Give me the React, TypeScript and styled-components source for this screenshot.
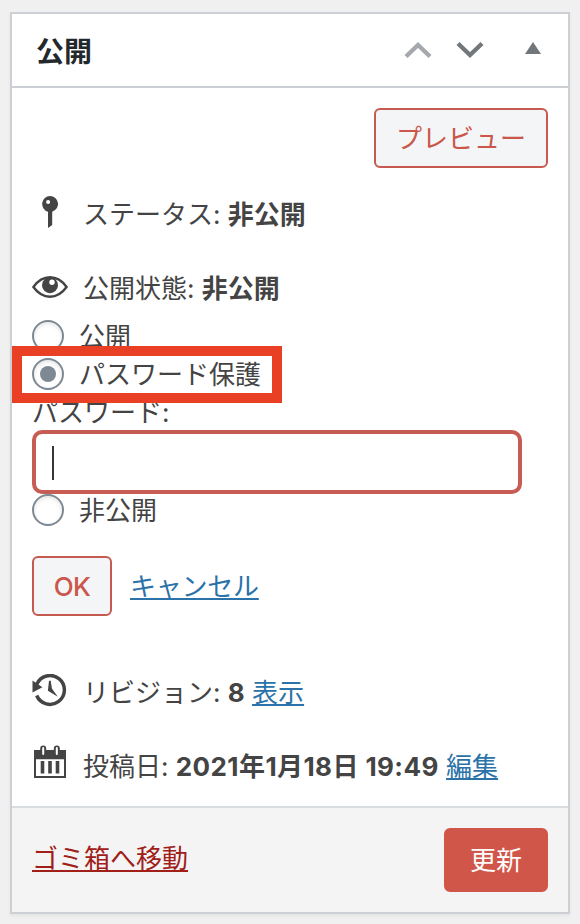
import React from "react";
import styled, { createGlobalStyle } from "styled-components";

const GlobalStyle = createGlobalStyle`
  *, *::before, *::after { box-sizing: border-box; }
  body {
    margin: 0;
    background: #f0f0f1;
    color: #444;
    font: 26px/38px Inter, "Noto Sans CJK JP", sans-serif;
  }
`;

const Page = styled.main`
  height: 924px;
  padding: 12px 10px 10px;
  overflow: hidden;
`;

const Panel = styled.section`
  position: relative;
  display: flex;
  flex-direction: column;
  height: 902px;
  border: 2px solid #ccd0d4;
  background: #fff;
  box-shadow: 0 2px 3px rgba(0, 0, 0, 0.05);
`;

const Header = styled.header`
  display: flex;
  align-items: center;
  justify-content: space-between;
  height: 74px;
  padding: 0 27px 0 24px;
  border-bottom: 2px solid #ccd0d4;
`;

const Title = styled.h2`
  margin: 0;
  padding-top: 3px;
  color: #23282d;
  font-size: 28px;
  font-weight: 700;
`;

const HeaderActions = styled.div`
  display: flex;
  align-items: center;
`;

const IconButton = styled.button<{ $gap?: number; $lift?: number }>`
  display: flex;
  margin: 0 0 0 ${(p) => p.$gap ?? 0}px;
  padding: 0 0 ${(p) => p.$lift ?? 0}px;
  border: 0;
  background: none;
`;

const Body = styled.div`
  display: flex;
  flex-direction: column;
  height: 718px;
  padding: 20px;
`;

const Button = styled.button<{ $width: number; $primary?: boolean }>`
  width: ${(p) => p.$width}px;
  height: ${(p) => (p.$primary ? 64 : 60)}px;
  padding: 2px 0 0;
  border: 2px solid ${(p) => (p.$primary ? "#d1564a" : "#c55a50")};
  border-radius: 6px;
  background: ${(p) => (p.$primary ? "#d1564a" : "#f3f5f6")};
  color: ${(p) => (p.$primary ? "#fff" : "#cb564b")};
  font: inherit;
`;

const PreviewButton = styled(Button)`
  align-self: flex-end;
`;

const OkButton = styled(Button)`
  font-weight: 500;
  letter-spacing: -0.6px;
`;

const InfoRow = styled.div<{ $top: number }>`
  display: flex;
  align-items: center;
  gap: 15px;
  height: 38px;
  margin-top: ${(p) => p.$top}px;
  white-space: nowrap;

  strong { font-weight: 700; }
`;

const Text = styled.span`
  padding-top: 2px;
`;

const PostDate = styled.strong`
  letter-spacing: 0.42px;
`;

const Link = styled.a<{ $danger?: boolean }>`
  color: ${(p) => (p.$danger ? "#a02018" : "#2a72a8")};
  text-decoration: underline;
  text-decoration-thickness: 2px;
  text-decoration-skip-ink: none;
  text-underline-offset: 2px;
`;

const CancelLink = styled(Link)`
  padding-top: 2px;
  letter-spacing: -0.25px;
`;

const TrashLink = styled(Link)`
  padding-bottom: 2px;
`;

const VisibilityOptions = styled.div`
  margin-top: 10px;
`;

const RadioRow = styled.label`
  display: flex;
  align-items: center;
  gap: 15px;
  height: 38px;
`;

const Radio = styled.span<{ $checked?: boolean }>`
  display: grid;
  place-items: center;
  width: 32px;
  height: 32px;
  border: 2px solid #7e8993;
  border-radius: 50%;
  background: #fff;
  box-shadow: inset 0 2px 4px rgba(0, 0, 0, 0.1);

  &::after {
    content: "";
    width: 16px;
    height: 16px;
    border-radius: 50%;
    background: ${(p) => (p.$checked ? "#7e8993" : "transparent")};
  }
`;

const FieldLabel = styled.div`
  height: 37px;
  padding-top: 1px;
`;

const PasswordField = styled.div`
  display: flex;
  align-items: center;
  width: 490px;
  height: 64px;
  margin-bottom: -3px;
  padding: 2px 0 0 16px;
  border: 4px solid #c65c53;
  border-radius: 10px;
`;

const Caret = styled.span`
  width: 2px;
  height: 34px;
  background: #32373c;
`;

const Actions = styled.div`
  display: flex;
  align-items: center;
  gap: 18px;
  margin-top: 27px;
`;

const Highlight = styled.div`
  position: absolute;
  top: 332px;
  left: 0;
  width: 270px;
  height: 57px;
  border: 10px solid #e94025;
`;

const Footer = styled.footer`
  display: flex;
  align-items: center;
  justify-content: space-between;
  flex: 1;
  padding: 0 20px;
  border-top: 2px solid #d9dcdf;
  background: #f4f4f4;
`;

const Chevron = ({ down = false }: { down?: boolean }) => (
  <svg width="28" height="18" viewBox="0 0 28 18" fill="none" stroke={down ? "#72777c" : "#a5a9ae"} strokeWidth="4.4">
    <path d={down ? "M2 2.5 14 14 26 2.5" : "M2 15.5 14 4 26 15.5"} />
  </svg>
);

const Triangle = () => (
  <svg width="16" height="12" viewBox="0 0 16 12" fill="#72777c">
    <path d="M8 0 16 12H0z" />
  </svg>
);

const PinIcon = () => (
  <svg width="36" height="36" viewBox="0 0 36 36" fill="#444">
    <path fillRule="evenodd" d="M18 0a8 8 0 0 1 2.2 15.7V29L16 32V15.7A8 8 0 0 1 18 0zm-1.9 4a2 2 0 1 0 0 4 2 2 0 0 0 0-4z" />
  </svg>
);

const EyeIcon = () => (
  <svg width="36" height="36" viewBox="0 0 36 36">
    <path d="M1.4 17C6 10.6 11.5 7.3 18 7.3S30 10.6 34.6 17C30 23.4 24.5 26.7 18 26.7S6 23.4 1.4 17z" fill="none" stroke="#444" strokeWidth="2.4" />
    <circle cx="18" cy="15.2" r="8" fill="#444" />
    <circle cx="20" cy="12.2" r="2.7" fill="#fff" />
  </svg>
);

const HistoryIcon = () => (
  <svg width="36" height="36" viewBox="0 1 36 36">
    <path d="M4.8 11.2A14.4 14.4 0 1 1 4.7 22.5" fill="none" stroke="#444" strokeWidth="3.5" />
    <path d="M.5 7.5 10.4 14.2.5 19.5zM17 7.8 18.7 7.8 19.9 15.5 25.8 23.8 15.9 17.8z" fill="#444" />
  </svg>
);

const CalendarIcon = () => (
  <svg width="36" height="36" viewBox="0 4 36 36" overflow="visible">
    <path fillRule="evenodd" d="M2 6h32v28H2zm2 9.3v16.6h28V15.3z" fill="#444" />
    <path d="M8.7 17h3.6v12.5H8.7zM16.2 17h3.6v12.5h-3.6zM23.7 17h3.6v12.5h-3.6z" fill="#444" />
    <rect x="8.2" y="1.5" width="6" height="10" rx="3" fill="#444" />
    <rect x="21.8" y="1.5" width="6" height="10" rx="3" fill="#444" />
    <path d="M11.2 4v6M24.8 4v6" stroke="#fff" strokeWidth="2" strokeLinecap="round" />
  </svg>
);

export default function App() {
  return (
    <Page>
      <GlobalStyle />
      <Panel>
        <Header>
          <Title>公開</Title>
          <HeaderActions>
            <IconButton aria-label="上に移動"><Chevron /></IconButton>
            <IconButton aria-label="下に移動" $gap={24}><Chevron down /></IconButton>
            <IconButton aria-label="パネルを閉じる" $gap={41} $lift={4}><Triangle /></IconButton>
          </HeaderActions>
        </Header>
        <Body>
          <PreviewButton $width={174}>プレビュー</PreviewButton>
          <InfoRow $top={27}>
            <PinIcon />
            <Text>ステータス: <strong>非公開</strong></Text>
          </InfoRow>
          <InfoRow $top={36}>
            <EyeIcon />
            <Text>公開状態: <strong>非公開</strong></Text>
          </InfoRow>
          <VisibilityOptions>
            <RadioRow><Radio /><Text>公開</Text></RadioRow>
            <RadioRow><Radio $checked /><Text>パスワード保護</Text></RadioRow>
            <FieldLabel>パスワード:</FieldLabel>
            <PasswordField><Caret /></PasswordField>
            <RadioRow><Radio /><Text>非公開</Text></RadioRow>
          </VisibilityOptions>
          <Actions>
            <OkButton $width={80}>OK</OkButton>
            <CancelLink>キャンセル</CancelLink>
          </Actions>
          <InfoRow $top={57}>
            <HistoryIcon />
            <Text>リビジョン: <strong>8</strong> <Link>表示</Link></Text>
          </InfoRow>
          <InfoRow $top={36}>
            <CalendarIcon />
            <Text>投稿日: <PostDate>2021年1月18日 19:49</PostDate> <Link>編集</Link></Text>
          </InfoRow>
        </Body>
        <Footer>
          <TrashLink $danger>ゴミ箱へ移動</TrashLink>
          <Button $width={104} $primary>更新</Button>
        </Footer>
        <Highlight />
      </Panel>
    </Page>
  );
}
